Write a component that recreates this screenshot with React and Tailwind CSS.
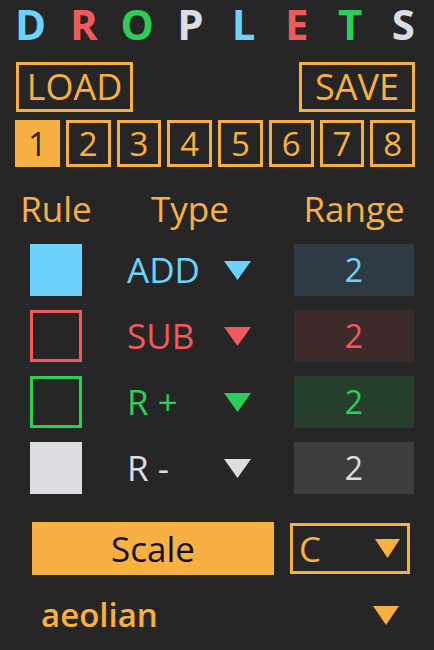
const ORANGE = "#f9b042";

const rules = [
  { type: "ADD", color: "#6dd3fc", bg: "#2e3b44", filled: true },
  { type: "SUB", color: "#f05a5a", bg: "#3d2a2a", filled: false },
  { type: "R +", color: "#2dcd5a", bg: "#253f2c", filled: false },
  { type: "R -", color: "#dcdde0", bg: "#3d3d3d", filled: true },
];

const title = [
  ["D", "#6dd3fc"],
  ["R", "#f05a5a"],
  ["O", "#2dcd5a"],
  ["P", "#dcdde0"],
  ["L", "#6dd3fc"],
  ["E", "#f05a5a"],
  ["T", "#2dcd5a"],
  ["S", "#dcdde0"],
];

function Tri({ color, className = "w-[27px] h-[19px]" }) {
  return (
    <svg className={className} viewBox="0 0 27 19" preserveAspectRatio="none">
      <polygon points="0,0 27,0 13.5,19" fill={color} />
    </svg>
  );
}

export default function App() {
  return (
    <div
      className="w-[434px] min-h-[650px] bg-[#262626] flex flex-col"
      style={{ fontFamily: '"Open Sans", sans-serif' }}
    >
      {/* Title */}
      <div className="grid grid-cols-8 px-[4px] h-[48px] items-center">
        {title.map(([ch, c], i) => (
          <span
            key={i}
            className="text-center text-[42px] font-bold leading-[48px]"
            style={{ color: c }}
          >
            {ch}
          </span>
        ))}
      </div>

      {/* Load / Save */}
      <div className="flex justify-between pl-[16px] pr-[19px] mt-[14px]">
        <div className="w-[117px] h-[50px] border-[3px] border-[#f9b042] text-[#f9b042] flex items-center justify-center text-[36px] font-medium leading-[44px]">
          LOAD
        </div>
        <div className="w-[116px] h-[50px] border-[3px] border-[#f9b042] text-[#f9b042] flex items-center justify-center text-[36px] font-medium leading-[44px]">
          SAVE
        </div>
      </div>

      {/* Pattern slots */}
      <div className="grid grid-cols-8 gap-[6px] w-[400px] ml-[15px] mt-[8px]">
        {[1, 2, 3, 4, 5, 6, 7, 8].map((n) => (
          <div
            key={n}
            className={
              n === 1
                ? "h-[47px] bg-[#f9b042] text-[#262626] flex items-center justify-center text-[33px] font-medium leading-[40px]"
                : "h-[47px] border-[3px] border-[#f9b042] text-[#f9b042] flex items-center justify-center text-[33px] font-medium leading-[40px]"
            }
          >
            {n}
          </div>
        ))}
      </div>

      {/* Header */}
      <div className="flex items-center h-[44px] mt-[20px] pl-[16px] text-[#f9b042] text-[35px] font-medium leading-[44px]">
        <div className="w-[80px] text-center">Rule</div>
        <div className="w-[198px] text-center pr-[10px]">Type</div>
        <div className="w-[120px] text-center">Range</div>
      </div>

      {/* Rules */}
      <div className="flex flex-col gap-[14px] mt-[13px] pl-[16px]">
        {rules.map((r, i) => (
          <div key={i} className="flex items-center h-[52px]">
            <div className="w-[80px] flex justify-center">
              <div
                className="w-[52px] h-[52px] border-[3px]"
                style={{
                  borderColor: r.color,
                  backgroundColor: r.filled ? r.color : "transparent",
                }}
              />
            </div>
            <div className="w-[198px] flex items-center pl-[31px]">
              <span
                className="w-[97px] text-[35px] font-medium leading-[44px]"
                style={{ color: r.color }}
              >
                {r.type}
              </span>
              <Tri color={r.color} />
            </div>
            <div
              className="w-[120px] h-[52px] flex items-center justify-center text-[32px] font-medium leading-[40px]"
              style={{ backgroundColor: r.bg, color: r.color }}
            >
              2
            </div>
          </div>
        ))}
      </div>

      {/* Scale */}
      <div className="flex items-center mt-[28px] pl-[32px]">
        <div className="w-[242px] h-[53px] bg-[#f9b042] text-[#111] flex items-center justify-center text-[35px] font-medium leading-[44px]">
          Scale
        </div>
        <div className="ml-[16px] w-[120px] h-[51px] border-[3px] border-[#f9b042] text-[#f9b042] flex items-center justify-between pl-[6px] pr-[7px] text-[35px] font-medium leading-[44px]">
          <span>C</span>
          <Tri color={ORANGE} className="w-[25px] h-[19px]" />
        </div>
      </div>

      {/* Mode */}
      <div className="flex items-center justify-between mt-[20px] pl-[41px] pr-[35px] h-[40px]">
        <span className="text-[33px] font-semibold leading-[40px] text-[#f9b042]">
          aeolian
        </span>
        <Tri color={ORANGE} className="w-[26px] h-[19px]" />
      </div>
    </div>
  );
}
